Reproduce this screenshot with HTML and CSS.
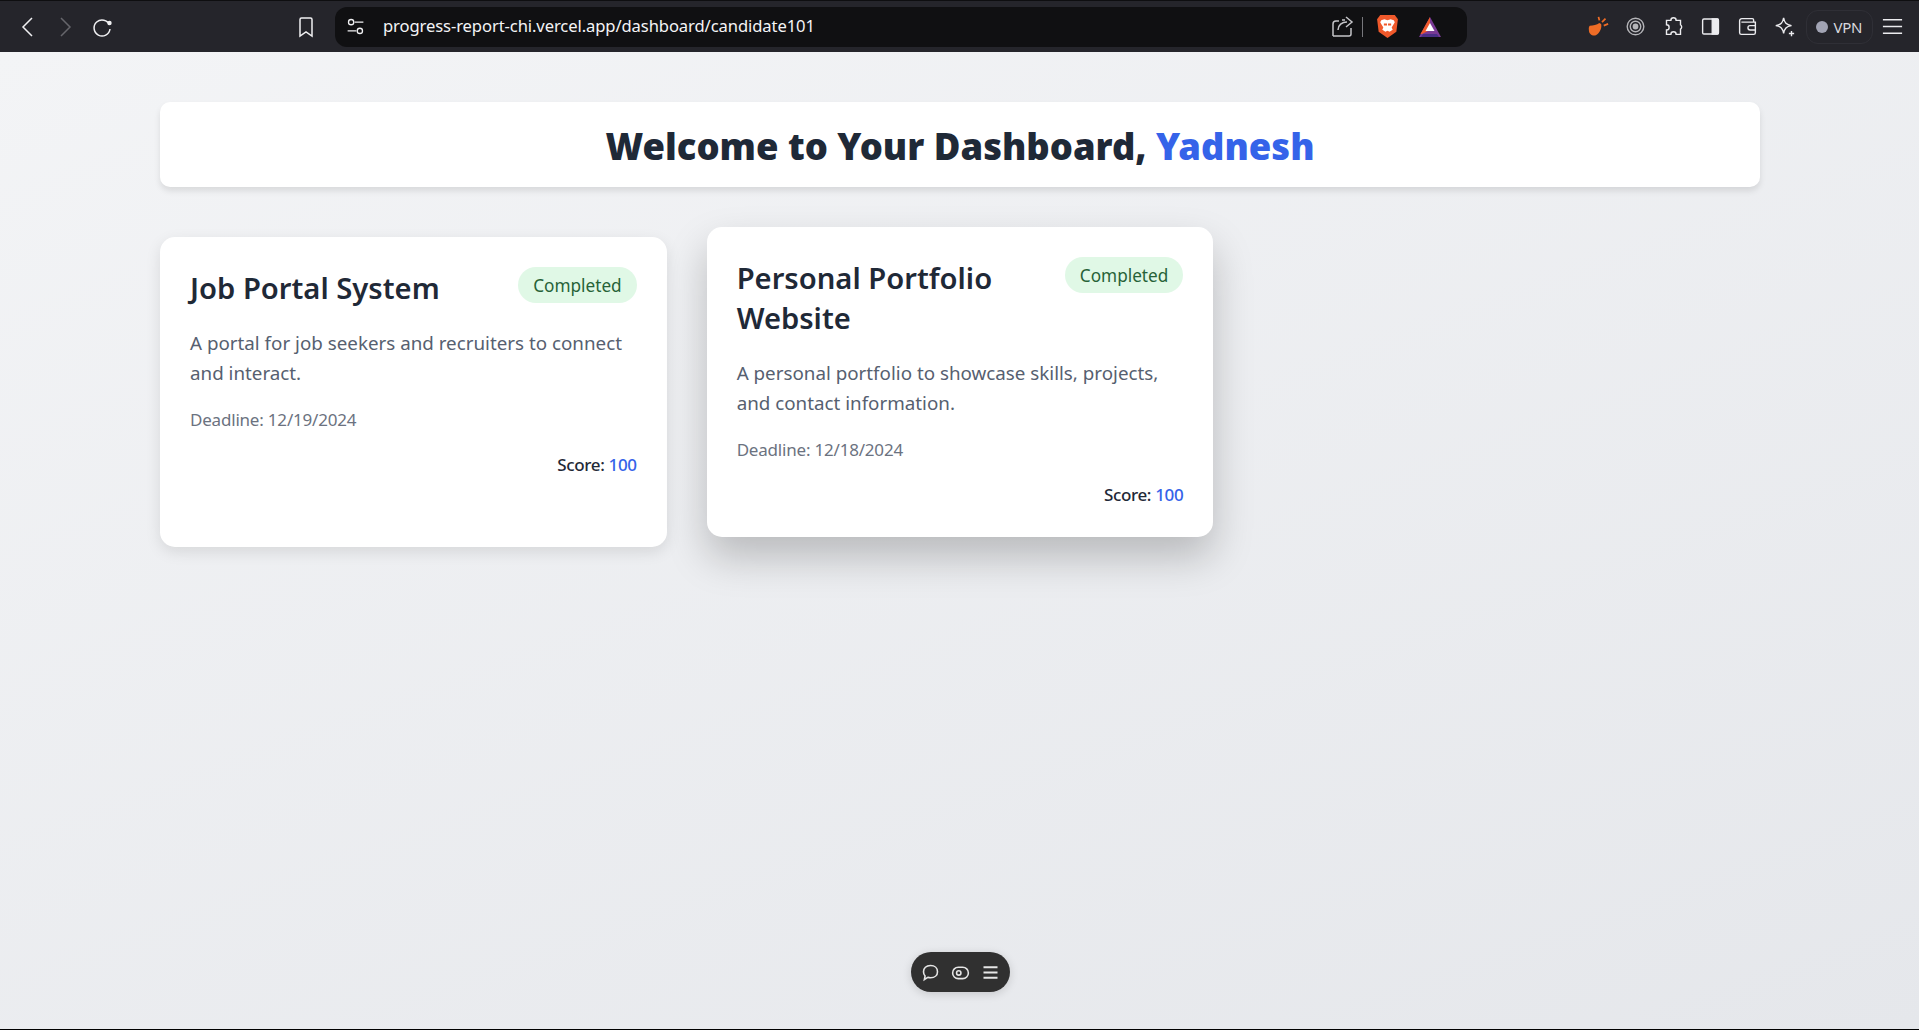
FILE: index.html
```html
<!DOCTYPE html>
<html lang="en">
<head>
    <meta charset="UTF-8">
    <meta name="viewport" content="width=device-width, initial-scale=1.0">
    <title>Dashboard</title>
    <link rel="stylesheet" href="styles.css">
</head>
<body>

    <header class="toolbar">
        <div class="nav-group">
            <svg class="icon" viewBox="0 0 24 24"><path d="M16 3 7 12l9 9"/></svg>
            <svg class="icon icon-dim" viewBox="0 0 24 24"><path d="m8 3 9 9-9 9"/></svg>
            <svg class="icon" viewBox="0 0 24 24"><path d="M19.5 10A8 8 0 1 0 20 14"/><circle class="dot" cx="19.5" cy="8" r="2.2"/></svg>
        </div>
        <svg class="icon bookmark" viewBox="0 0 24 24"><path d="M6 4.5A1.5 1.5 0 0 1 7.500 3h9A1.500 1.500 0 0 1 18 4.500V21l-6-4-6 4z"/></svg>
        <div class="url-bar">
            <svg class="icon icon-small" viewBox="0 0 24 24"><circle cx="7" cy="7" r="3"/><path d="M11 7h10M3 17h10"/><circle cx="17" cy="17" r="3"/></svg>
            <span class="url">progress-report-chi.vercel.app/dashboard/candidate101</span>
            <svg class="icon share" viewBox="0 0 24 24"><path d="M15 5h-3M3 21V9a3 3 0 0 1 3-3h3M3 21h16a2 2 0 0 0 2-2v-6"/><path d="M8 15c0-5 4-8 9-8M16 2l6 5-6 5"/></svg>
            <span class="url-divider"></span>
            <svg class="shield" viewBox="0 0 24 24"><path fill="#f0592b" d="M5 1h14l3 4-1.500 12L12 23l-8.500-6L2 5z"/><path fill="#fff" d="M6 6l3-1 3 1 3-1 3 1 1 2-3 5 1 2-3 2-2-1-2 1-3-2 1-2-3-5z"/><path fill="#f0592b" d="M8.500 9h3v2h-3zM12.500 9h3v2h-3zM10.500 18h3l-1.500 2z"/></svg>
            <svg class="triangle" viewBox="0 0 24 24"><path fill="#7a3a96" d="M12 2 23 22H1z"/><path fill="#f0592b" d="M12 2v13l-8 4H2.500z"/><path fill="#fff" d="m12 8 4.500 8h-9z"/><path fill="#4a2f86" d="M5 19h14l2 3H3z"/></svg>
        </div>
        <div class="tools">
            <svg class="tool" viewBox="0 0 24 24"><path fill="#ee6c26" d="M2 11c4 0 8-1 11-3l2 1c1 4-1 10-6 13-4 1-8-1-8-6-.3-2 0-4 1-5z"/><path class="accent" d="M13 5 12 1M16 7l4-4M18 11l5-2"/></svg>
            <svg class="tool tool-grey" viewBox="0 0 24 24"><circle cx="12" cy="12" r="9.500"/><circle cx="12" cy="12" r="6"/><circle class="grey-dot" cx="12" cy="12" r="2.500"/></svg>
            <svg class="tool" viewBox="0 0 24 24"><path d="M9 5a3 3 0 0 1 6 0h5v5a3 3 0 0 1 0 5v6h-5a3 3 0 0 0-6 0H4v-5a3 3 0 0 0 0-6V5z"/></svg>
            <svg class="tool" viewBox="0 0 24 24"><rect x="3" y="3.500" width="18" height="17" rx="1.500"/><path class="fill" d="M14 3.500h6a1 1 0 0 1 1 1v15a1 1 0 0 1-1 1h-6z"/></svg>
            <svg class="tool" viewBox="0 0 24 24"><path d="M19 7V4.500A1.500 1.500 0 0 0 17.500 3h-12A2.500 2.500 0 0 0 3 5.500V19a2 2 0 0 0 2 2h14a2 2 0 0 0 2-2V7H5"/><path d="M21 11h-6a2 2 0 0 0 0 5h6"/></svg>
            <svg class="tool" viewBox="0 0 24 24"><path d="M11 2c1 6 3 8 9 9-6 1-8 3-9 9-1-6-3-8-9-9 6-1 8-3 9-9z"/><path d="M20 17v6M17 20h6"/></svg>
            <div class="vpn"><span class="vpn-dot"></span>VPN</div>
            <svg class="tool menu" viewBox="0 0 24 24"><path d="M2 5h20M2 12h20M2 19h20"/></svg>
        </div>
    </header>

    <main class="page">
        <div class="welcome">
            <h1>Welcome to Your Dashboard, <span class="name">Yadnesh</span></h1>
        </div>

        <div class="project-grid">
            <div class="project-card">
                <div class="card-top">
                    <h2>Job Portal System</h2>
                    <span class="status">Completed</span>
                </div>
                <p class="desc">A portal for job seekers and recruiters to connect and interact.</p>
                <p class="deadline">Deadline: 12/19/2024</p>
                <p class="score">Score: <span class="score-value">100</span></p>
            </div>
            <div class="project-card project-card-hover">
                <div class="card-top">
                    <h2>Personal Portfolio Website</h2>
                    <span class="status">Completed</span>
                </div>
                <p class="desc">A personal portfolio to showcase skills, projects, and contact information.</p>
                <p class="deadline">Deadline: 12/18/2024</p>
                <p class="score">Score: <span class="score-value">100</span></p>
            </div>
        </div>
    </main>

    <div class="float-bar">
        <svg viewBox="0 0 24 24"><path d="M12 4c5 0 8 3 8 7s-3 7-8 7c-1 0-2 0-3-.500L5 20l.800-4C4.500 14.500 4 13 4 11c0-4 3-7 8-7z"/></svg>
        <svg viewBox="0 0 24 24"><rect x="3" y="6" width="18" height="13" rx="6.500"/><circle cx="10" cy="12.500" r="2.500"/></svg>
        <svg viewBox="0 0 24 24"><path class="thick" d="M4 6h16M4 12h16M4 18h16"/></svg>
    </div>

</body>
</html>
```

FILE: styles.css
```css
* {
    box-sizing: border-box;
}
html, body {
    height: 100%;
}
body {
    margin: 0;
    display: flex;
    flex-direction: column;
    overflow: hidden;
    font-family: "Noto Sans", "Open Sans", sans-serif;
    background: #000;
    padding-bottom: 1px;
}
svg {
    display: block;
    flex: none;
}

/* browser bar */
.toolbar {
    height: 52px;
    flex: none;
    display: flex;
    align-items: center;
    background: #25252b;
    border-top: 1px solid #0e0e10;
    padding-left: 16px;
}
.nav-group {
    display: flex;
    align-items: center;
    gap: 13px;
}
.icon {
    width: 24px;
    height: 24px;
    fill: none;
    stroke: #f0f0f2;
    stroke-width: 1.5;
}
.icon-dim {
    stroke: #66666b;
}
.dot {
    fill: #f0f0f2;
    stroke: none;
}
.bookmark {
    margin-left: 180px;
    margin-right: 17px;
}
.url-bar {
    width: 1132px;
    height: 40px;
    display: flex;
    align-items: center;
    background: #101012;
    border-radius: 12px;
    padding-left: 10px;
}
.icon-small {
    width: 21px;
    height: 21px;
}
.url {
    margin-left: 17px;
    padding-bottom: 2px;
    color: #f4f4f6;
    font-size: 16.6px;
    letter-spacing: -0.1px;
    flex: 1;
}
.share {
    stroke: #c4c4c8;
    width: 24px;
    height: 24px;
}
.url-divider {
    width: 1px;
    height: 20px;
    background: #77777c;
    margin: 0 12px 0 8px;
}
.shield {
    width: 25px;
    height: 25px;
}
.triangle {
    width: 24px;
    height: 24px;
    margin: 0 25px 0 18px;
}
.tools {
    display: flex;
    align-items: center;
    margin-left: 121px;
    gap: 16.3px;
}
.tool {
    width: 21px;
    height: 21px;
    fill: none;
    stroke: #ececef;
    stroke-width: 1.6;
}
.tool path[fill] {
    stroke: none;
}
.accent {
    stroke: #ee6c26;
    stroke-width: 2;
}
.tool-grey {
    stroke: #b4b4b8;
}
.grey-dot {
    fill: #b4b4b8;
}
.fill {
    fill: #ececef;
}
.vpn {
    height: 34px;
    width: 67px;
    margin-left: -6px;
    margin-right: -8px;
    display: flex;
    align-items: center;
    justify-content: center;
    gap: 5px;
    border: 1px solid #2f2f36;
    border-radius: 12px;
    color: #d8d8de;
    font-size: 15px;
    letter-spacing: -0.3px;
}
.vpn-dot {
    width: 12px;
    height: 12px;
    border-radius: 50%;
    background: #a2a4b4;
}
.menu {
    width: 23px;
    height: 23px;
}

/* dashboard */
.page {
    flex: 1;
    padding: 50px 159px 0 160px;
    background: linear-gradient(160deg, #f3f4f6, #e5e7eb);
}
.welcome {
    background: #fff;
    border-radius: 10px;
    padding: 22px 20px 18px;
    text-align: center;
    box-shadow: 0 4px 6px rgba(0, 0, 0, 0.1);
    margin-bottom: 50px;
}
h1 {
    margin: 0;
    font-size: 36.4px;
    line-height: 45px;
    font-weight: 900;
    color: #1f2937;
}
.name {
    color: #3563e9;
}
.project-grid {
    display: grid;
    grid-template-columns: repeat(3, 1fr);
    gap: 40px;
}
.project-card {
    background: #fff;
    border-radius: 15px;
    padding: 30px 30px 31px;
    box-shadow: 0 5px 15px rgba(0, 0, 0, 0.1);
}
.project-card-hover {
    transform: translateY(-10px);
    box-shadow: 0 20px 40px rgba(0, 0, 0, 0.22);
}
.card-top {
    display: flex;
    justify-content: space-between;
    align-items: flex-start;
    gap: 20px;
    margin-bottom: 20px;
}
h2 {
    margin: 0;
    padding-top: 1px;
    font-size: 29.2px;
    line-height: 40px;
    font-weight: 600;
    color: #1f2937;
}
.status {
    flex: none;
    height: 36px;
    font-size: 17.2px;
    line-height: 37px;
    padding: 0 15px;
    border-radius: 18px;
    background: #e0f8e6;
    color: #276238;
}
.desc {
    margin: 0;
    font-size: 18.8px;
    line-height: 30px;
    color: #566070;
}
.deadline {
    margin: 20px 0 0;
    font-size: 17px;
    letter-spacing: -0.2px;
    line-height: 24px;
    color: #6b7280;
}
.score {
    margin: 22px 0 0;
    font-size: 17px;
    font-weight: 500;
    letter-spacing: -0.35px;
    line-height: 22px;
    text-align: right;
    color: #1f2937;
}
.score-value {
    color: #3563e9;
}

/* floating pill at the bottom */
.float-bar {
    position: absolute;
    left: 911px;
    top: 952px;
    width: 99px;
    height: 40px;
    display: flex;
    align-items: center;
    justify-content: center;
    gap: 9px;
    background: #303030;
    border-radius: 20px;
    box-shadow: 0 2px 10px rgba(0, 0, 0, 0.15);
}
.float-bar svg {
    width: 21px;
    height: 21px;
    fill: none;
    stroke: #e6e6e6;
    stroke-width: 1.8;
}
.float-bar .thick {
    stroke-width: 2.4;
}
```
